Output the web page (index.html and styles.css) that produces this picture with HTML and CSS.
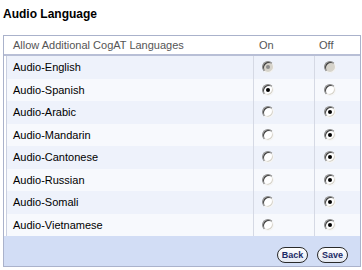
FILE: index.html
```html
<!DOCTYPE html>
<html lang="en">
<head>
  <meta charset="UTF-8" />
  <title>Audio Language</title>
  <link rel="stylesheet" href="styles.css">
</head>
<body>
  <h1 class="title">Audio Language</h1>

  <div class="panel">
    <div class="row head">
      <div class="name">Allow Additional CogAT Languages</div>
      <div class="on">On</div>
      <div class="off">Off</div>
    </div>

    <div class="rows">
      <div class="row">
        <div class="name">Audio-English</div>
        <div class="on"><input type="radio" name="english" checked disabled></div>
        <div class="off"><input type="radio" name="english" disabled></div>
      </div>
      <div class="row">
        <div class="name">Audio-Spanish</div>
        <div class="on"><input type="radio" name="spanish" checked></div>
        <div class="off"><input type="radio" name="spanish"></div>
      </div>
      <div class="row">
        <div class="name">Audio-Arabic</div>
        <div class="on"><input type="radio" name="arabic"></div>
        <div class="off"><input type="radio" name="arabic" checked></div>
      </div>
      <div class="row">
        <div class="name">Audio-Mandarin</div>
        <div class="on"><input type="radio" name="mandarin"></div>
        <div class="off"><input type="radio" name="mandarin" checked></div>
      </div>
      <div class="row">
        <div class="name">Audio-Cantonese</div>
        <div class="on"><input type="radio" name="cantonese"></div>
        <div class="off"><input type="radio" name="cantonese" checked></div>
      </div>
      <div class="row">
        <div class="name">Audio-Russian</div>
        <div class="on"><input type="radio" name="russian"></div>
        <div class="off"><input type="radio" name="russian" checked></div>
      </div>
      <div class="row">
        <div class="name">Audio-Somali</div>
        <div class="on"><input type="radio" name="somali"></div>
        <div class="off"><input type="radio" name="somali" checked></div>
      </div>
      <div class="row">
        <div class="name">Audio-Vietnamese</div>
        <div class="on"><input type="radio" name="vietnamese"></div>
        <div class="off"><input type="radio" name="vietnamese" checked></div>
      </div>
    </div>

    <div class="actions">
      <button type="button">Back</button>
      <button type="button">Save</button>
    </div>
  </div>
</body>
</html>
```

FILE: styles.css
```css
body {
  margin: 0;
  font-family: 'Liberation Sans', Arial, sans-serif;
  background: #fff;
  color: #000;
}

.title {
  margin: 0 0 13px 3px;
  padding-top: 7px;
  font-size: 12px;
  line-height: 15px;
  font-weight: bold;
}

.panel {
  margin-left: 3px;
  width: 356px;
  border: 1px solid #aab2cb;
  background: #fff;
}

.row {
  display: grid;
  grid-template-columns: 249px 61px 46px;
  height: 22.5px;
  font-size: 11px;
}

.row > div {
  display: flex;
  align-items: center;
}

.row .name {
  padding-left: 9px;
}

.row .on,
.row .off {
  border-left: 1px solid #d5d9e4;
  padding-left: 8px;
}

.row .off {
  padding-left: 9px;
}

.head {
  height: 18px;
  color: #555;
  border-bottom: 2px solid #b8bfd6;
}

.head .on,
.head .off {
  border-left: none;
  padding-left: 6px;
}

.head .off {
  padding-left: 5px;
}

.rows .row .name {
  box-shadow: inset 2px 0 #fff, inset 3px 0 #c9cfe0;
}

.rows .row:nth-child(odd) {
  background: #eef2fb;
}

.rows .row:nth-child(even) {
  background: #f7f9fd;
}

input[type="radio"] {
  appearance: none;
  -webkit-appearance: none;
  margin: 0;
  width: 12px;
  height: 12px;
  border-radius: 50%;
  border: 1px solid;
  border-color: #8a8a8a #f4f4f4 #f4f4f4 #8a8a8a;
  box-shadow: inset 1px 1px #404040, inset -1px -1px #d8d5cc;
  background: #fff;
  position: relative;
}

input[type="radio"]:checked::after {
  content: "";
  position: absolute;
  left: 3px;
  top: 3px;
  width: 4px;
  height: 4px;
  border-radius: 50%;
  background: #000;
}

input[type="radio"]:disabled {
  background: #d6d3cb;
}

input[type="radio"]:disabled:checked::after {
  background: #8c8c8c;
}

.actions {
  height: 30px;
  background: #d2ddf5;
  display: flex;
  justify-content: flex-end;
  align-items: flex-end;
  gap: 9px;
  padding: 0 12px 3px 0;
  box-sizing: border-box;
}

.actions button {
  width: 31px;
  height: 16px;
  padding: 0;
  border: 1.5px solid #2a2a2a;
  border-radius: 8px;
  background: linear-gradient(#ffffff, #e4e8f2);
  font-family: 'Liberation Sans', Arial, sans-serif;
  font-size: 9px;
  font-weight: bold;
  color: #1b2a66;
  cursor: pointer;
}
```
